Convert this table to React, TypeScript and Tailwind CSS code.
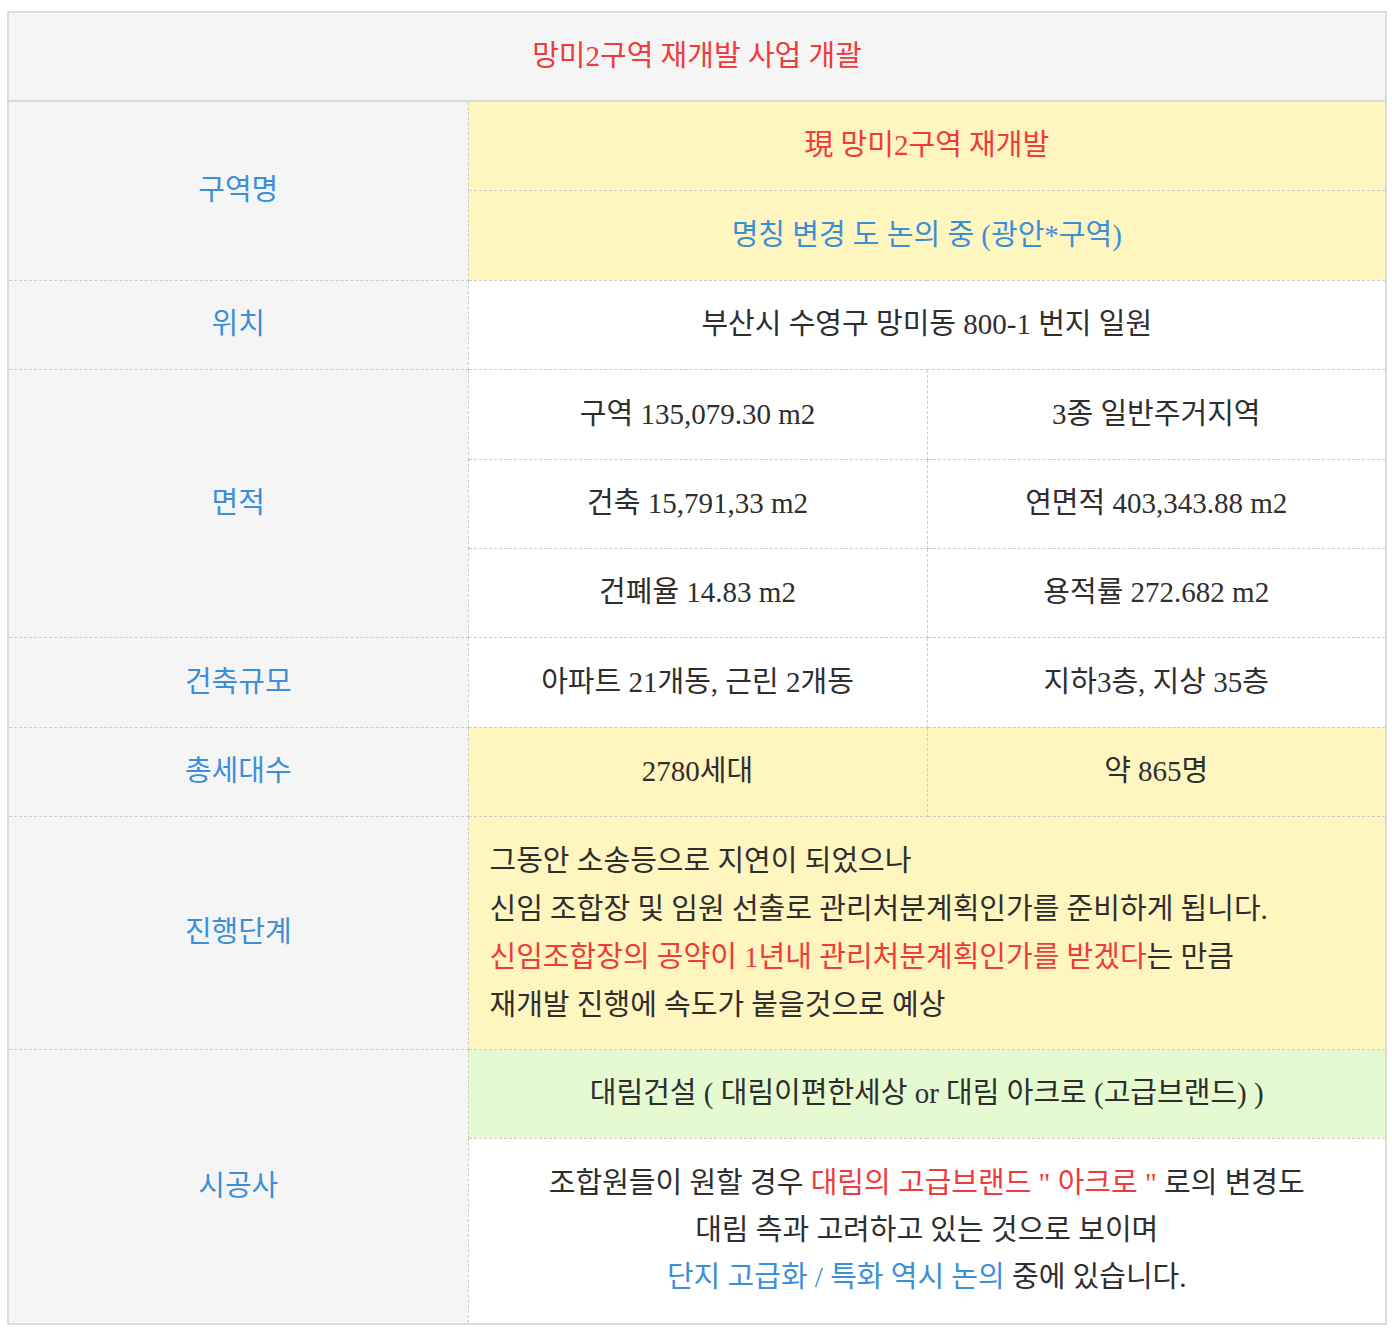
import React from "react";

const F = { fontFamily: '"Liberation Serif", "Noto Sans CJK KR", serif' };

const lbl = "bg-[#f5f5f5] text-[#3b8fd9] text-center align-middle border border-dashed border-[#cccccc]";
const cell = "text-center align-middle border border-dashed border-[#cccccc] text-[#2e2e2e]";

export default function App() {
  return (
    <div className="bg-white w-[1392px] h-[1332px] pt-[11px] pl-[7px]" style={F}>
      <table className="table-fixed border-collapse w-[1378px] text-[29px] leading-[1.2] border-2 border-solid border-[#dcdcdc]">
        <colgroup>
          <col className="w-[460px]" />
          <col className="w-[459px]" />
          <col className="w-[459px]" />
        </colgroup>
        <tbody>
          <tr>
            <td colSpan={3} className="h-[89px] bg-[#f5f5f5] text-center align-middle text-[#ee3b3b] border-b-2 border-solid border-[#d9d9d9]">
              망미2구역 재개발 사업 개괄
            </td>
          </tr>
          <tr>
            <td rowSpan={2} className={lbl}>구역명</td>
            <td colSpan={2} className={`${cell} h-[89px] bg-[#fff5bf] !text-[#ee3b3b]`}>現 망미2구역 재개발</td>
          </tr>
          <tr>
            <td colSpan={2} className={`${cell} h-[90px] bg-[#fff5bf] !text-[#3b8fd9]`}>명칭 변경 도 논의 중 (광안*구역)</td>
          </tr>
          <tr>
            <td className={`${lbl} h-[89px]`}>위치</td>
            <td colSpan={2} className={`${cell} bg-white`}>부산시 수영구 망미동 800-1 번지 일원</td>
          </tr>
          <tr>
            <td rowSpan={3} className={lbl}>면적</td>
            <td className={`${cell} h-[90px] bg-white`}>구역 135,079.30 m2</td>
            <td className={`${cell} bg-white`}>3종 일반주거지역</td>
          </tr>
          <tr>
            <td className={`${cell} h-[89px] bg-white`}>건축 15,791,33 m2</td>
            <td className={`${cell} bg-white`}>연면적 403,343.88 m2</td>
          </tr>
          <tr>
            <td className={`${cell} h-[89px] bg-white`}>건폐율 14.83 m2</td>
            <td className={`${cell} bg-white`}>용적률 272.682 m2</td>
          </tr>
          <tr>
            <td className={`${lbl} h-[90px]`}>건축규모</td>
            <td className={`${cell} bg-white`}>아파트 21개동, 근린 2개동</td>
            <td className={`${cell} bg-white`}>지하3층, 지상 35층</td>
          </tr>
          <tr>
            <td className={`${lbl} h-[89px]`}>총세대수</td>
            <td className={`${cell} bg-[#fff5bf]`}>2780세대</td>
            <td className={`${cell} bg-[#fff5bf]`}>약 865명</td>
          </tr>
          <tr>
            <td className={`${lbl} h-[233px]`}>진행단계</td>
            <td colSpan={2} className={`${cell} !text-left bg-[#fff5bf] pl-[21px] leading-[48px]`}>
              그동안 소송등으로 지연이 되었으나
              <br />
              신임 조합장 및 임원 선출로 관리처분계획인가를 준비하게 됩니다.
              <br />
              <span className="text-[#ee3b3b]">신임조합장의 공약이 1년내 관리처분계획인가를 받겠다</span>는 만큼
              <br />
              재개발 진행에 속도가 붙을것으로 예상
            </td>
          </tr>
          <tr>
            <td rowSpan={2} className={lbl}>시공사</td>
            <td colSpan={2} className={`${cell} h-[89px] bg-[#e5fad0]`}>
              대림건설 ( 대림이편한세상 or 대림 아크로 (고급브랜드) )
            </td>
          </tr>
          <tr>
            <td colSpan={2} className={`${cell} h-[186px] bg-white leading-[47px]`}>
              조합원들이 원할 경우 <span className="text-[#ee3b3b]">대림의 고급브랜드 " 아크로 "</span> 로의 변경도
              <br />
              대림 측과 고려하고 있는 것으로 보이며
              <br />
              <span className="text-[#3b8fd9]">단지 고급화 / 특화 역시 논의</span> 중에 있습니다.
            </td>
          </tr>
        </tbody>
      </table>
    </div>
  );
}
